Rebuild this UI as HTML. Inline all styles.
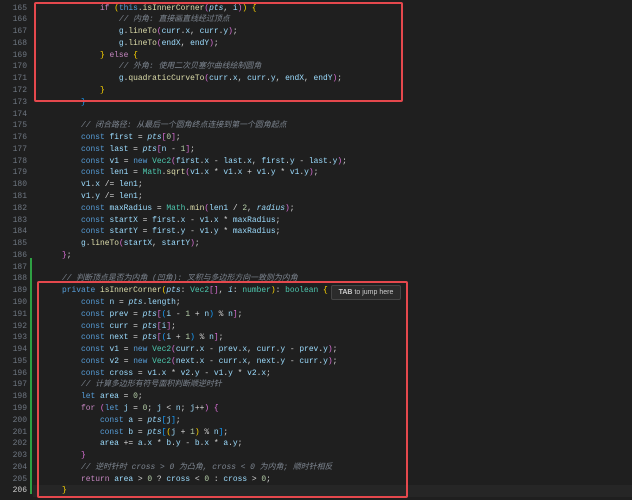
<!DOCTYPE html>
<html><head><meta charset="utf-8"><style>
body{margin:0;width:632px;height:500px;background:#1f1f1f;overflow:hidden;position:relative;font-family:"Liberation Mono","Noto Sans CJK SC",monospace;}
.ln{position:absolute;left:0;width:27px;text-align:right;color:#6e7681;font-size:8px;}
.code{position:absolute;left:43px;white-space:pre;font-size:7.92px;color:#d4d4d4;}
.row{position:absolute;height:12px;line-height:12px;}
.k{color:#569cd6}.c{color:#c586c0}.v{color:#9cdcfe}.f{color:#dcdcaa}.t{color:#4ec9b0}.n{color:#b5cea8}
.cm{color:#7d8590;font-style:italic}.i{font-style:italic;color:#9cdcfe}
.b1{color:#ffd700}.b2{color:#da70d6}.b3{color:#179fff}
.box{position:absolute;border:2px solid #e5484d;border-radius:2px;}
</style></head><body>
<div style="position:absolute;left:30px;top:258px;width:2px;height:236px;background:#2ea043"></div>
<div style="position:absolute;left:33px;top:485px;width:599px;height:12px;background:#262626"></div>
<div id="L"></div>
<div class="box" style="left:34px;top:2px;width:365px;height:96px"></div>
<div class="box" style="left:37px;top:281px;width:367px;height:213px"></div>
<div style="position:absolute;left:331px;top:285px;width:68px;height:13px;background:#2b2b2b;border:1px solid #454545;border-radius:2px;color:#cccccc;font:7px 'Liberation Sans',sans-serif;line-height:13px;text-align:center"><b>TAB</b> to jump here</div>
<script>
var lines=[
'        <span class="c">if</span> <span class="b1">(</span><span class="k">this</span>.<span class="f">isInnerCorner</span><span class="b2">(</span><span class="i">pts</span>, <span class="v">i</span><span class="b2">)</span><span class="b1">)</span> <span class="b1">{</span>',
'            <span class="cm">// 内角: 直接画直线经过顶点</span>',
'            <span class="v">g</span>.<span class="f">lineTo</span><span class="b2">(</span><span class="v">curr</span>.<span class="v">x</span>, <span class="v">curr</span>.<span class="v">y</span><span class="b2">)</span>;',
'            <span class="v">g</span>.<span class="f">lineTo</span><span class="b2">(</span><span class="v">endX</span>, <span class="v">endY</span><span class="b2">)</span>;',
'        <span class="b1">}</span> <span class="c">else</span> <span class="b1">{</span>',
'            <span class="cm">// 外角: 使用二次贝塞尔曲线绘制圆角</span>',
'            <span class="v">g</span>.<span class="f">quadraticCurveTo</span><span class="b2">(</span><span class="v">curr</span>.<span class="v">x</span>, <span class="v">curr</span>.<span class="v">y</span>, <span class="v">endX</span>, <span class="v">endY</span><span class="b2">)</span>;',
'        <span class="b1">}</span>',
'      <span class="b3">}</span>',
'',
'      <span class="cm">// 闭合路径: 从最后一个圆角终点连接到第一个圆角起点</span>',
'      <span class="k">const</span> <span class="v">first</span> = <span class="i">pts</span><span class="b2">[</span><span class="n">0</span><span class="b2">]</span>;',
'      <span class="k">const</span> <span class="v">last</span> = <span class="i">pts</span><span class="b2">[</span><span class="v">n</span> - <span class="n">1</span><span class="b2">]</span>;',
'      <span class="k">const</span> <span class="v">v1</span> = <span class="k">new</span> <span class="t">Vec2</span><span class="b2">(</span><span class="v">first</span>.<span class="v">x</span> - <span class="v">last</span>.<span class="v">x</span>, <span class="v">first</span>.<span class="v">y</span> - <span class="v">last</span>.<span class="v">y</span><span class="b2">)</span>;',
'      <span class="k">const</span> <span class="v">len1</span> = <span class="t">Math</span>.<span class="f">sqrt</span><span class="b2">(</span><span class="v">v1</span>.<span class="v">x</span> * <span class="v">v1</span>.<span class="v">x</span> + <span class="v">v1</span>.<span class="v">y</span> * <span class="v">v1</span>.<span class="v">y</span><span class="b2">)</span>;',
'      <span class="v">v1</span>.<span class="v">x</span> /= <span class="v">len1</span>;',
'      <span class="v">v1</span>.<span class="v">y</span> /= <span class="v">len1</span>;',
'      <span class="k">const</span> <span class="v">maxRadius</span> = <span class="t">Math</span>.<span class="f">min</span><span class="b2">(</span><span class="v">len1</span> / <span class="n">2</span>, <span class="i">radius</span><span class="b2">)</span>;',
'      <span class="k">const</span> <span class="v">startX</span> = <span class="v">first</span>.<span class="v">x</span> - <span class="v">v1</span>.<span class="v">x</span> * <span class="v">maxRadius</span>;',
'      <span class="k">const</span> <span class="v">startY</span> = <span class="v">first</span>.<span class="v">y</span> - <span class="v">v1</span>.<span class="v">y</span> * <span class="v">maxRadius</span>;',
'      <span class="v">g</span>.<span class="f">lineTo</span><span class="b2">(</span><span class="v">startX</span>, <span class="v">startY</span><span class="b2">)</span>;',
'    <span class="b2">}</span>;',
'',
'    <span class="cm">// 判断顶点是否为内角 (凹角): 叉积与多边形方向一致则为内角</span>',
'    <span class="k">private</span> <span class="f">isInnerCorner</span><span class="b1">(</span><span class="i">pts</span>: <span class="t">Vec2</span><span class="b2">[]</span>, <span class="i">i</span>: <span class="t">number</span><span class="b1">)</span>: <span class="t">boolean</span> <span class="b1">{</span>',
'      <span class="k">const</span> <span class="v">n</span> = <span class="i">pts</span>.<span class="v">length</span>;',
'      <span class="k">const</span> <span class="v">prev</span> = <span class="i">pts</span><span class="b2">[</span><span class="b3">(</span><span class="v">i</span> - <span class="n">1</span> + <span class="v">n</span><span class="b3">)</span> % <span class="v">n</span><span class="b2">]</span>;',
'      <span class="k">const</span> <span class="v">curr</span> = <span class="i">pts</span><span class="b2">[</span><span class="v">i</span><span class="b2">]</span>;',
'      <span class="k">const</span> <span class="v">next</span> = <span class="i">pts</span><span class="b2">[</span><span class="b3">(</span><span class="v">i</span> + <span class="n">1</span><span class="b3">)</span> % <span class="v">n</span><span class="b2">]</span>;',
'      <span class="k">const</span> <span class="v">v1</span> = <span class="k">new</span> <span class="t">Vec2</span><span class="b2">(</span><span class="v">curr</span>.<span class="v">x</span> - <span class="v">prev</span>.<span class="v">x</span>, <span class="v">curr</span>.<span class="v">y</span> - <span class="v">prev</span>.<span class="v">y</span><span class="b2">)</span>;',
'      <span class="k">const</span> <span class="v">v2</span> = <span class="k">new</span> <span class="t">Vec2</span><span class="b2">(</span><span class="v">next</span>.<span class="v">x</span> - <span class="v">curr</span>.<span class="v">x</span>, <span class="v">next</span>.<span class="v">y</span> - <span class="v">curr</span>.<span class="v">y</span><span class="b2">)</span>;',
'      <span class="k">const</span> <span class="v">cross</span> = <span class="v">v1</span>.<span class="v">x</span> * <span class="v">v2</span>.<span class="v">y</span> - <span class="v">v1</span>.<span class="v">y</span> * <span class="v">v2</span>.<span class="v">x</span>;',
'      <span class="cm">// 计算多边形有符号面积判断顺逆时针</span>',
'      <span class="k">let</span> <span class="v">area</span> = <span class="n">0</span>;',
'      <span class="c">for</span> <span class="b2">(</span><span class="k">let</span> <span class="v">j</span> = <span class="n">0</span>; <span class="v">j</span> &lt; <span class="v">n</span>; <span class="v">j</span>++<span class="b2">)</span> <span class="b2">{</span>',
'        <span class="k">const</span> <span class="v">a</span> = <span class="i">pts</span><span class="b3">[</span><span class="v">j</span><span class="b3">]</span>;',
'        <span class="k">const</span> <span class="v">b</span> = <span class="i">pts</span><span class="b3">[</span><span class="b1">(</span><span class="v">j</span> + <span class="n">1</span><span class="b1">)</span> % <span class="v">n</span><span class="b3">]</span>;',
'        <span class="v">area</span> += <span class="v">a</span>.<span class="v">x</span> * <span class="v">b</span>.<span class="v">y</span> - <span class="v">b</span>.<span class="v">x</span> * <span class="v">a</span>.<span class="v">y</span>;',
'      <span class="b2">}</span>',
'      <span class="cm">// 逆时针时 cross &gt; 0 为凸角, cross &lt; 0 为内角; 顺时针相反</span>',
'      <span class="c">return</span> <span class="v">area</span> &gt; <span class="n">0</span> ? <span class="v">cross</span> &lt; <span class="n">0</span> : <span class="v">cross</span> &gt; <span class="n">0</span>;',
'    <span class="b1">}</span>'
];
var map={4:4,6:8,8:12,12:16};
var h='';
for(var k=0;k<lines.length;k++){
 var y=(2.5+k*11.78).toFixed(2);
 var s=lines[k].replace(/^( +)/,function(m){var n=map[m.length]||m.length;return new Array(n+1).join(' ');});
 h+='<div class="row ln" style="top:'+y+'px'+(k==41?';color:#ccc':'')+'">'+(165+k)+'</div>';
 h+='<div class="row code" style="top:'+y+'px">'+s+'</div>';
}
document.getElementById('L').innerHTML=h;
</script>
</body></html>
